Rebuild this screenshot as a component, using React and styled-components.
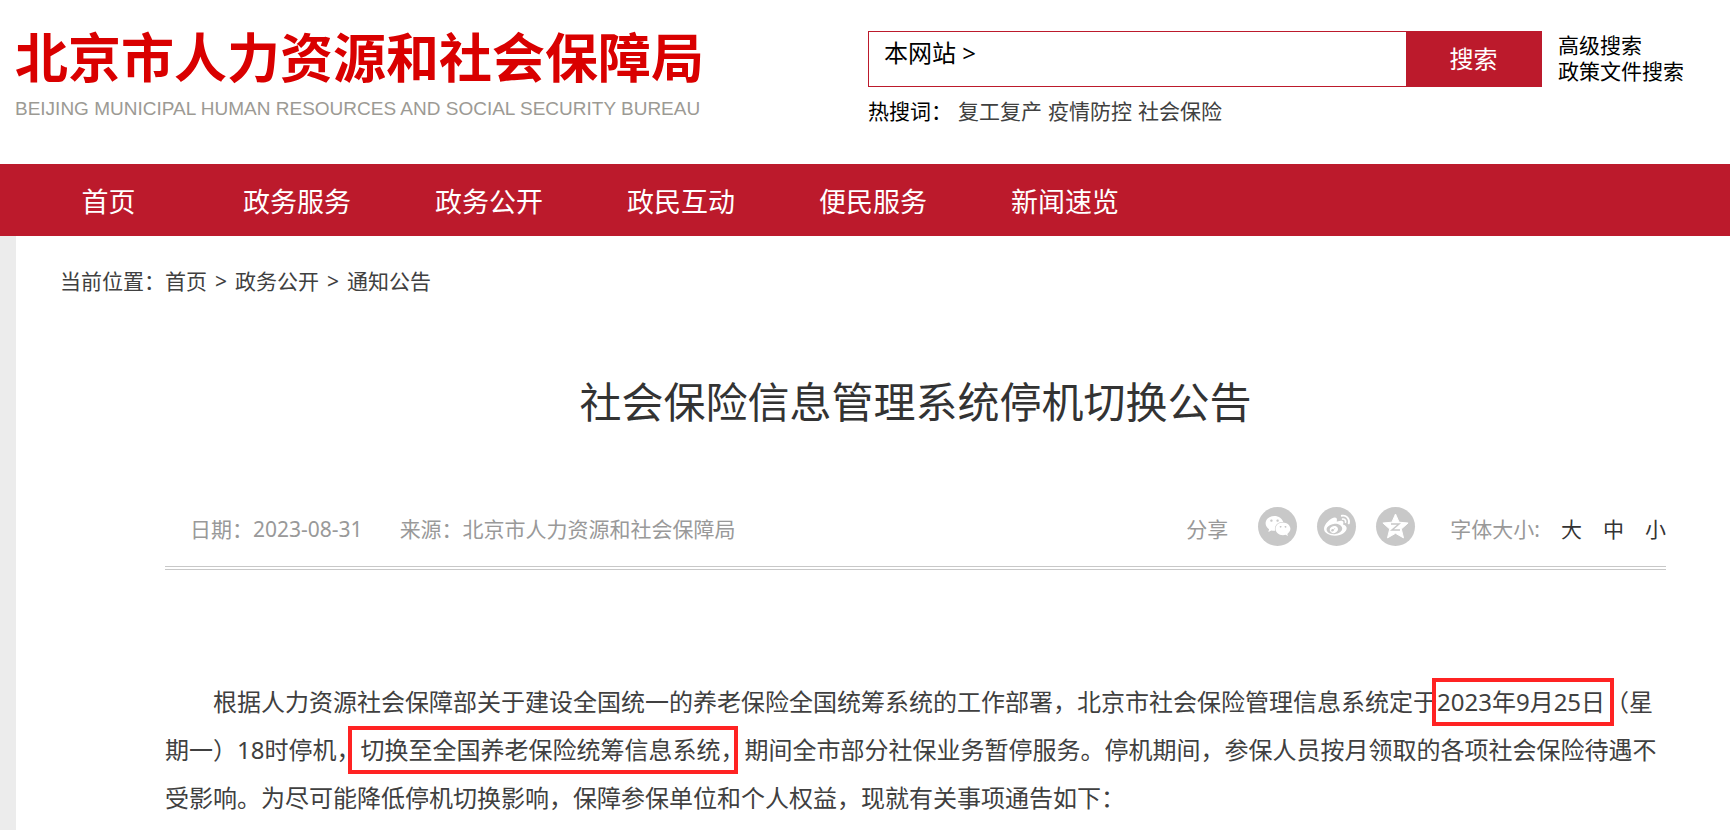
import React from "react";
import styled, { createGlobalStyle } from "styled-components";
import { FaWeixin, FaWeibo } from "react-icons/fa";

const red = "#bc1a2c";

const GlobalStyle = createGlobalStyle`
  * { box-sizing: border-box; }
  body {
    margin: 0;
    background: #fff;
    color: #404040;
    font: 21px/28px "Noto Sans", "Noto Sans CJK SC", sans-serif;
    text-spacing-trim: space-all;
  }
  a { color: inherit; text-decoration: none; }
  h1, p, ul, ol { margin: 0; padding: 0; list-style: none; font-weight: 400; }
  button, input { font: inherit; border: 0; border-radius: 0; padding: 0; margin: 0; }
`;

const Header = styled.header`
  display: flex;
  height: 164px;
  padding-left: 15px;
`;

const Logo = styled.a`
  flex: 0 0 853px;
  display: flex;
  flex-direction: column;
  padding-top: 24px;
  white-space: nowrap;
`;

const LogoName = styled.span`
  color: #d90000;
  font-size: 53px;
  line-height: 68px;
  font-weight: 700;
`;

const LogoEnglish = styled.span`
  color: #9c9a94;
  font: 19px/34px "Liberation Sans", sans-serif;
`;

const SearchArea = styled.div`
  flex: 1;
  padding-top: 31px;
  color: #000;
`;

const SearchRow = styled.form`
  display: flex;
  gap: 16px;
`;

const SearchBox = styled.div`
  display: flex;
  width: 674px;
  height: 56px;
  border: 1px solid ${red};
`;

const Scope = styled.label`
  padding: 5px 8px 0 15px;
  font-size: 24px;
  line-height: 32px;
  white-space: nowrap;
`;

const SearchInput = styled.input`
  flex: 1;
  min-width: 0;
  background: transparent;
  outline: none;
`;

const SearchButton = styled.button`
  width: 135px;
  background: ${red};
  color: #fff;
  font-size: 24px;
`;

const SearchLinks = styled.div`
  display: flex;
  flex-direction: column;
  line-height: 26px;
  padding-top: 1px;
  white-space: nowrap;
`;

const HotWords = styled.div`
  display: flex;
  gap: 6px;
  padding-top: 10px;
  a { color: #404040; }
`;

const HotLabel = styled.span`
  width: 84px;
`;

const Nav = styled.nav`
  background: ${red};
  color: #fff;
  font-size: 27px;
  line-height: 76px;
  height: 72px;
  padding-left: 16px;
`;

const NavList = styled.ul`
  display: flex;
`;

const NavItem = styled.li`
  width: ${(p) => (p.$home ? 185 : 192)}px;
  text-align: center;
`;

const Main = styled.main`
  border-left: 16px solid #ececec;
  padding: 31px 64px 8px 44px;
`;

const Crumbs = styled.ol`
  display: flex;
  li + li::before { content: ">"; padding: 0 8px; }
`;

const Article = styled.article`
  padding: 79px 0 0 105px;
`;

const Title = styled.h1`
  color: #333;
  font-size: 42px;
  line-height: 56px;
  text-align: center;
`;

const Meta = styled.div`
  display: flex;
  align-items: center;
  height: 140px;
  padding: 73px 0 11px 25px;
  border-bottom: 4px double #c8c8c8;
  color: #999;
  white-space: nowrap;
`;

const Source = styled.span`
  flex: 1;
  padding-left: 37px;
`;

const Share = styled.div`
  display: flex;
  align-items: center;
  gap: 20px;
  padding-right: 35px;
  span { margin-right: 10px; }
`;

const ShareButton = styled.button`
  display: grid;
  place-items: center;
  width: 39px;
  height: 39px;
  margin-bottom: 6px;
  border-radius: 50%;
  background: #c8c8c8;
  color: #fff;
`;

const FontSizes = styled.div`
  display: flex;
  gap: 21px;
`;

const SizeButton = styled.button`
  background: none;
  color: #333;
`;

const Body = styled.p`
  padding-top: 108px;
  font-size: 24px;
  line-height: 48px;
  text-indent: 48px;
`;

const Marked = styled.span`
  position: relative;
  display: inline-block;
  text-indent: 0;
  &::after {
    content: "";
    position: absolute;
    top: 0;
    bottom: 0;
    left: ${(p) => p.$left}px;
    right: ${(p) => p.$right}px;
    border: 4px solid #ff2323;
  }
`;

const QzoneIcon = () => (
  <svg width="27" height="26" viewBox="0 0 27 26" aria-hidden="true">
    <path
      fill="#fff"
      stroke="#fff"
      strokeLinejoin="round"
      d="M13.5 1l3.600 8.200 9 .8-6.800 6 2.200 8.900-8-4.600-8 4.600 2.200-8.900-6.800-6 9-.8z"
    />
    <path fill="none" stroke="#c8c8c8" strokeWidth="1.500" d="M9 11h8l-7 6h8" />
  </svg>
);

const navItems = ["首页", "政务服务", "政务公开", "政民互动", "便民服务", "新闻速览"];
const crumbs = ["首页", "政务公开", "通知公告"];
const hotWords = ["复工复产", "疫情防控", "社会保险"];

export default function App() {
  return (
    <div lang="zh-CN">
      <GlobalStyle />
      <Header>
        <Logo href="#">
          <LogoName>北京市人力资源和社会保障局</LogoName>
          <LogoEnglish>BEIJING MUNICIPAL HUMAN RESOURCES AND SOCIAL SECURITY BUREAU</LogoEnglish>
        </Logo>
        <SearchArea>
          <SearchRow onSubmit={(e) => e.preventDefault()}>
            <SearchBox>
              <Scope htmlFor="q">本网站 &gt;</Scope>
              <SearchInput id="q" type="text" />
              <SearchButton type="submit">搜索</SearchButton>
            </SearchBox>
            <SearchLinks>
              <a href="#">高级搜索</a>
              <a href="#">政策文件搜索</a>
            </SearchLinks>
          </SearchRow>
          <HotWords>
            <HotLabel>热搜词：</HotLabel>
            {hotWords.map((w) => <a href="#" key={w}>{w}</a>)}
          </HotWords>
        </SearchArea>
      </Header>
      <Nav>
        <NavList>
          {navItems.map((t, i) => (
            <NavItem key={t} $home={i === 0}><a href="#">{t}</a></NavItem>
          ))}
        </NavList>
      </Nav>
      <Main>
        <Crumbs>
          当前位置：
          {crumbs.map((c) => <li key={c}><a href="#">{c}</a></li>)}
        </Crumbs>
        <Article>
          <Title>社会保险信息管理系统停机切换公告</Title>
          <Meta>
            <span>日期：2023-08-31</span>
            <Source>来源：北京市人力资源和社会保障局</Source>
            <Share>
              <span>分享</span>
              <ShareButton aria-label="微信"><FaWeixin size={26} /></ShareButton>
              <ShareButton aria-label="微博"><FaWeibo size={26} /></ShareButton>
              <ShareButton aria-label="QQ空间"><QzoneIcon /></ShareButton>
            </Share>
            <FontSizes>
              <span>字体大小:</span>
              <SizeButton>大</SizeButton>
              <SizeButton>中</SizeButton>
              <SizeButton>小</SizeButton>
            </FontSizes>
          </Meta>
          <Body>
            根据人力资源社会保障部关于建设全国统一的养老保险全国统筹系统的工作部署，北京市社会保险管理信息系统定于<Marked $left={-5} $right={-9}>2023年9月25日</Marked>（星期一）18时停机，<Marked $left={-12} $right={6}>切换至全国养老保险统筹信息系统，</Marked>期间全市部分社保业务暂停服务。停机期间，参保人员按月领取的各项社会保险待遇不受影响。为尽可能降低停机切换影响，保障参保单位和个人权益，现就有关事项通告如下：
          </Body>
        </Article>
      </Main>
    </div>
  );
}
